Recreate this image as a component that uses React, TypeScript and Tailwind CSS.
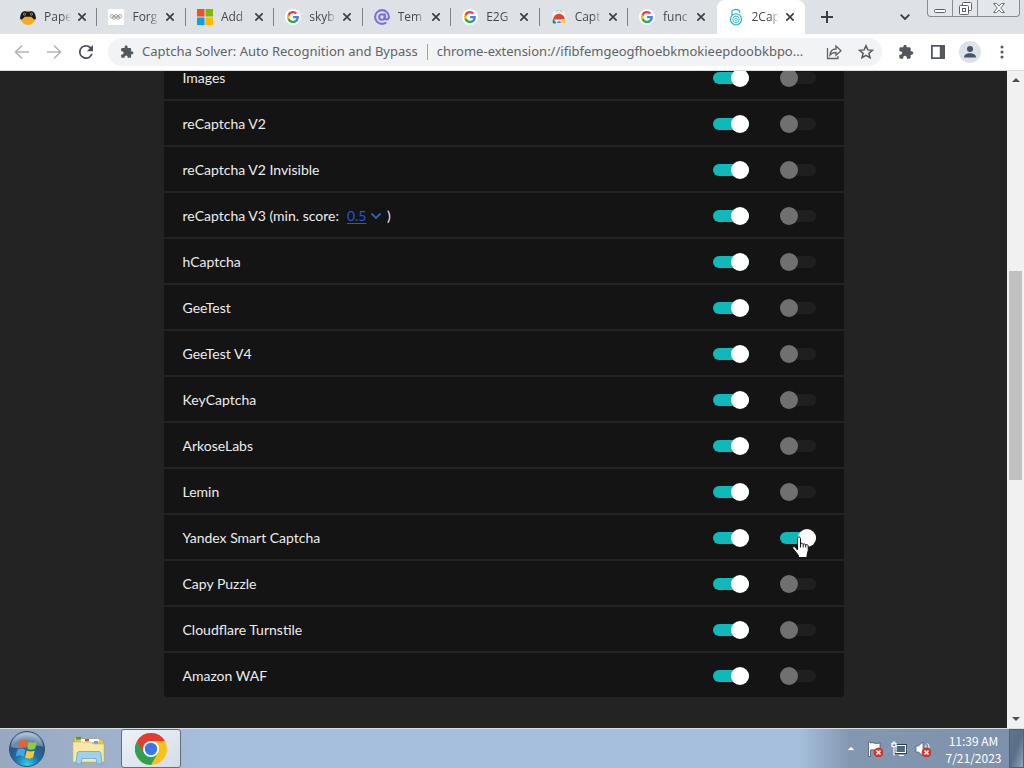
import React from "react";

const googleG = (
  <svg viewBox="0 0 18 18" className="size-4">
    <circle cx="9" cy="9" r="9" fill="#fff" />
    <g transform="translate(2.2 2.2) scale(.76)">
      <path fill="#4285F4" d="M17.64 9.2c0-.64-.06-1.25-.16-1.84H9v3.48h4.84a4.14 4.14 0 0 1-1.8 2.72v2.26h2.92c1.7-1.57 2.68-3.88 2.68-6.62z" />
      <path fill="#34A853" d="M9 18c2.43 0 4.47-.8 5.96-2.18l-2.92-2.26c-.8.54-1.84.86-3.04.86-2.34 0-4.33-1.58-5.04-3.71H.96v2.33A9 9 0 0 0 9 18z" />
      <path fill="#FBBC05" d="M3.96 10.71a5.4 5.4 0 0 1 0-3.42V4.96H.96a9 9 0 0 0 0 8.08z" />
      <path fill="#EA4335" d="M9 3.58c1.32 0 2.5.45 3.44 1.35l2.58-2.59A9 9 0 0 0 .96 4.96l3 2.33C4.67 5.16 6.66 3.58 9 3.58z" />
    </g>
  </svg>
);

const gamepad = (
  <svg viewBox="0 0 16 16" className="size-4">
    <circle cx="8" cy="8.800" r="7.200" fill="#f6ac1e" />
    <path fill="#1a1a1a" d="M3.300 2.500 5.200 2l.8.8h4l.8-.8 1.900.5c1.800.6 3 3.500 3.200 6.200.1 2-1.200 2.400-2.300 1.300L11.200 7.800H4.800L2.400 10C1.300 11.100 0 10.700.1 8.700.3 6 1.500 3.100 3.300 2.500z" />
    <circle cx="4.500" cy="5.200" r="1.100" fill="none" stroke="#ccc" strokeWidth=".6" />
    <circle cx="11.500" cy="5.200" r="1.100" fill="none" stroke="#ccc" strokeWidth=".6" />
  </svg>
);

const rings = (
  <svg viewBox="0 0 16 16" className="size-4">
    <path fill="#fff" d="M0 0h16v16H0z" />
    <g fill="none" stroke="#888" strokeWidth=".7">
      <circle cx="4" cy="7.200" r="1.700" />
      <circle cx="8" cy="7.200" r="1.700" />
      <circle cx="12" cy="7.200" r="1.700" />
      <circle cx="6" cy="8.600" r="1.700" />
      <circle cx="10" cy="8.600" r="1.700" />
    </g>
  </svg>
);

const microsoft = (
  <svg viewBox="0 0 16 16" className="size-4">
    <path fill="#f25022" d="M0 0h7.500v7.500H0z" />
    <path fill="#7fba00" d="M8.500 0H16v7.500H8.500z" />
    <path fill="#0aa1e8" d="M0 8.500h7.500V16H0z" />
    <path fill="#ffb900" d="M8.500 8.500H16V16H8.500z" />
  </svg>
);

const atSign = (
  <svg viewBox="0 0 16 16" className="size-4" fill="none" stroke="#7a72dc" strokeWidth="2.100" strokeLinecap="round">
    <circle cx="8" cy="8" r="2.800" />
    <path d="M10.800 5.200v3.300c0 2.800 4.100 2.300 4.100-.5A6.900 6.900 0 1 0 8 14.900c1.400 0 2.500-.3 3.600-1" />
  </svg>
);

const webStore = (
  <svg viewBox="0 0 16 16" className="size-4">
    <path fill="#f1f2f3" d="M2 2.500h12l1 12H1z" />
    <path fill="#c4c7cb" d="M5.500 1h5v2.500h-5z" />
    <path fill="#fff" d="M6.500 2h3v1h-3z" />
    <path fill="#db4437" d="M2.200 10.500a5.800 5.800 0 0 1 11.600 0z" />
    <path fill="#0f9d58" d="M2.200 9.500 6 14.500H1.800a7 7 0 0 1 .4-5z" />
    <path fill="#ffcd40" d="M10 10.500h3.800a6 6 0 0 1 .4 4H8z" />
    <path d="M5.300 14.500a2.700 2.700 0 1 1 5.400 0z" fill="#4285f4" stroke="#fff" strokeWidth=".7" />
  </svg>
);

const lock = (
  <svg viewBox="0 0 16 18" className="h-[18px] w-4" fill="none" stroke="#3bb7c4" strokeWidth="1.300">
    <path d="M4 7.200V3.500C4 .8 11.500.8 11.500 3.500V5" />
    <circle cx="8" cy="11.300" r="5.500" />
    <circle cx="8" cy="11.300" r="3.200" strokeWidth="1" />
    <circle cx="8" cy="11.300" r="1.200" strokeWidth=".9" />
  </svg>
);

const tabs = [
  { title: "Pape", icon: gamepad },
  { title: "Forg", icon: rings },
  { title: "Add", icon: microsoft },
  { title: "skyb", icon: googleG },
  { title: "Tem", icon: atSign },
  { title: "E2G", icon: googleG },
  { title: "Capt", icon: webStore },
  { title: "func", icon: googleG },
  { title: "2Cap", icon: lock },
];

function TabStrip() {
  return (
    <div className="flex h-[34px] shrink-0 items-stretch bg-[#dee1e6] pl-[9px]">
      <div role="tablist" className="flex max-w-[796px] flex-1">
        {tabs.map((tab, i) => {
          const active = i === tabs.length - 1;
          return (
            <div
              key={tab.title}
              className={
                active
                  ? "flex min-w-0 flex-1 items-center rounded-t-lg bg-white pl-[11px]"
                  : "flex min-w-0 flex-1 items-center pl-[11px]"
              }
            >
              <button role="tab" aria-selected={active} className="flex h-full items-center gap-2">
                <span className="flex w-4 shrink-0 justify-center">{tab.icon}</span>
                <span className="w-[30px] text-left text-xs whitespace-nowrap text-[#45494d] [mask-image:linear-gradient(to_right,black_60%,transparent_90%)]">
                  {tab.title}
                </span>
              </button>
              <button aria-label="Close tab" className="flex size-4 items-center justify-center">
                <svg viewBox="0 0 8 8" className="size-2" stroke="#3c4043" strokeWidth="1.700">
                  <path d="M.3.3l7.400 7.400M7.700.3.3 7.700" />
                </svg>
              </button>
              {!active && i !== tabs.length - 2 && <span className="ml-auto h-[18px] w-px bg-[#7f8388]" />}
            </div>
          );
        })}
      </div>
      <button aria-label="New tab" className="ml-3 flex w-5 items-center justify-center">
        <svg viewBox="0 0 12 12" className="size-3" stroke="#3c4043" strokeWidth="2">
          <path d="M6 0v12M0 6h12" />
        </svg>
      </button>
      <div className="ml-auto flex items-start gap-3 pr-1">
        <button aria-label="Search tabs" className="flex h-[34px] w-5 items-center justify-center">
          <svg viewBox="0 0 10 6" className="h-1.5 w-2.5" fill="none" stroke="#3c4043" strokeWidth="1.900">
            <path d="m.7.7 4.300 4.300L9.300.7" />
          </svg>
        </button>
        <div className="flex h-[17px] rounded-b border border-t-0 border-[#858c94] bg-[#e3e7ec]">
          <button aria-label="Minimize" className="flex w-[25px] items-center justify-center border-r border-[#858c94]">
            <svg viewBox="0 0 12 12" className="mt-1 size-3" fill="#fff" stroke="#5b6067">
              <rect x=".5" y="5.500" width="11" height="3" rx="1" />
            </svg>
          </button>
          <button aria-label="Restore" className="flex w-[25px] items-center justify-center border-r border-[#858c94]">
            <svg viewBox="0 0 13 13" className="size-[13px]" fill="#fff" stroke="#5b6067">
              <rect x="3.500" y=".5" width="9" height="8" rx="1" />
              <rect x=".5" y="3.500" width="9" height="9" rx="1" />
              <rect x="3.500" y="6.500" width="3" height="3" />
            </svg>
          </button>
          <button aria-label="Close" className="flex w-[41px] items-center justify-center">
            <svg viewBox="0 0 12 10" className="h-2.5 w-3" fill="#fff" stroke="#5b6067" strokeWidth=".9">
              <path d="M.6.5h3L6 3.100 8.400.5h3L7.700 5l3.700 4.500h-3L6 6.900 3.600 9.500h-3L4.300 5z" />
            </svg>
          </button>
        </div>
      </div>
    </div>
  );
}

function Puzzle({ className }: { className: string }) {
  return (
    <svg viewBox="0 0 24 24" className={className} fill="#54585d">
      <path d="M20.500 11H19V7c0-1.100-.9-2-2-2h-4V3.500a2.500 2.500 0 0 0-5 0V5H4c-1.100 0-2 .9-2 2v3.800h1.500a2.700 2.700 0 0 1 0 5.400H2V20c0 1.100.9 2 2 2h3.800v-1.500a2.700 2.700 0 0 1 5.400 0V22H17c1.100 0 2-.9 2-2v-4h1.500a2.500 2.500 0 0 0 0-5z" />
    </svg>
  );
}

function Arrow({ label, d }: { label: string; d: string }) {
  return (
    <button aria-label={label} className="flex size-8 items-center justify-center">
      <svg viewBox="0 0 16 16" className="size-4" fill="none" stroke="#b4b6b9" strokeWidth="1.700">
        <path d={d} />
      </svg>
    </button>
  );
}

function Toolbar() {
  return (
    <div className="flex h-[37px] shrink-0 items-center border-b border-[#dadce0] bg-white px-1.5">
      <Arrow label="Back" d="M15 8H2M8 1.500 1.500 8 8 14.500" />
      <Arrow label="Forward" d="M1 8h13M8 1.500 14.500 8 8 14.500" />
      <button aria-label="Reload" className="flex size-8 items-center justify-center">
        <svg viewBox="4 4 16 16" className="size-[14px]" fill="#4b4f54">
          <path d="M17.650 6.350A7.960 7.960 0 0 0 12 4a8 8 0 1 0 7.730 10h-2.080A6 6 0 1 1 12 6c1.660 0 3.140.69 4.220 1.780L13 11h7V4z" />
        </svg>
      </button>
      <div className="ml-1.5 flex h-7 min-w-0 flex-1 items-center rounded-full bg-[#f1f3f4] pr-0.5 pl-3 font-['Noto_Sans','Open_Sans',sans-serif] text-[13px] text-[#5f6368]">
        <Puzzle className="mr-2 size-[14px] shrink-0" />
        <span className="shrink-0 whitespace-nowrap">Captcha Solver: Auto Recognition and Bypass</span>
        <span className="mx-[9px] h-4 w-px shrink-0 bg-[#9aa0a6]" />
        <input
          aria-label="Address"
          readOnly
          value="chrome-extension://ifibfemgeogfhoebkmokieepdoobkbpo..."
          className="min-w-0 flex-1 bg-transparent text-ellipsis outline-none"
        />
        <button aria-label="Share" className="flex size-7 items-center justify-center">
          <svg viewBox="0 0 16 16" className="size-4" fill="none" stroke="#5f6368" strokeWidth="1.300">
            <path d="M1.500 4v10.500H12V12M4 11c.3-4 2.500-6 6-6V2l5 4.700-5 4.600V8.500C7.500 8.500 5.500 9 4 11z" />
          </svg>
        </button>
        <button aria-label="Bookmark" className="ml-1 flex size-7 items-center justify-center">
          <svg viewBox="0 0 16 16" className="size-4" fill="none" stroke="#54585d" strokeWidth="1.500">
            <path d="m8 1.700 1.800 4.200 4.600.4-3.500 3 1.100 4.500L8 11.400l-4 2.400 1.100-4.500-3.500-3 4.600-.4z" />
          </svg>
        </button>
      </div>
      <button aria-label="Extensions" className="ml-2 flex size-8 items-center justify-center">
        <Puzzle className="size-4" />
      </button>
      <button aria-label="Side panel" className="flex size-8 items-center justify-center">
        <svg viewBox="0 0 14 14" className="size-[14px]" fill="#54585d">
          <path fillRule="evenodd" d="M0 0h14v14H0zM1.800 1.800v10.400h7V1.800z" />
        </svg>
      </button>
      <button aria-label="Profile" className="flex size-8 items-center justify-center">
        <svg viewBox="0 0 22 22" className="size-[22px]">
          <circle cx="11" cy="11" r="11" fill="#dde1e8" />
          <circle cx="11" cy="8" r="3" fill="#4a5468" />
          <path fill="#4a5468" d="M5 16.500c0-3 3-4.200 6-4.200s6 1.200 6 4.200z" />
        </svg>
      </button>
      <button aria-label="Menu" className="flex size-8 items-center justify-center">
        <svg viewBox="0 0 4 14" className="h-[14px] w-1" fill="#54585d">
          <circle cx="2" cy="2" r="1.500" />
          <circle cx="2" cy="7" r="1.500" />
          <circle cx="2" cy="12" r="1.500" />
        </svg>
      </button>
    </div>
  );
}

const captchas = [
  "Images",
  "reCaptcha V2",
  "reCaptcha V2 Invisible",
  "reCaptcha V3",
  "hCaptcha",
  "GeeTest",
  "GeeTest V4",
  "KeyCaptcha",
  "ArkoseLabs",
  "Lemin",
  "Yandex Smart Captcha",
  "Capy Puzzle",
  "Cloudflare Turnstile",
  "Amazon WAF",
];

function Toggle({ label, on }: { label: string; on: boolean }) {
  return (
    <input
      type="checkbox"
      aria-label={label}
      defaultChecked={on}
      className="flex h-3 w-9 appearance-none items-center rounded-full bg-[#1f1f1f] before:size-[18px] before:shrink-0 before:rounded-full before:bg-[#707070] checked:justify-end checked:bg-[#0fb9b9] checked:before:bg-white"
    />
  );
}

function HandPointer() {
  return (
    <svg viewBox="0 0 17 22" className="pointer-events-none absolute top-1 left-3 h-[22px] w-[17px]">
      <path
        fill="#fff"
        stroke="#111"
        d="M5.500 14V2.500c0-2 3-2 3 0V8c0-1 2.500-1 2.700.5 0-1 2.500-.8 2.500.7 0-1 2.500-.7 2.500.8v4.500c0 2-1.200 3-1.200 5v2H6.500v-2C5 17.500 3 15 1 12.500c-1-1.800 1-2.500 2.200-1.300z"
      />
      <path stroke="#111" d="M8.500 8v3.500M11.200 8.500v3M13.700 9.200v2.300" />
    </svg>
  );
}

function SettingsPage() {
  return (
    <div className="flex min-h-0 flex-1 bg-[#232323]">
      <main className="flex flex-1 flex-col items-center justify-end overflow-hidden pb-[31px]">
        <ul className="flex w-full max-w-[680px] shrink-0 flex-col gap-0.5 overflow-hidden rounded font-['Lato','Inter',sans-serif] text-sm text-[#ececec]">
          {captchas.map((name) => (
            <li key={name} className="flex h-11 items-center bg-[#141414] pt-0.5 pr-7 pl-[19px]">
              <div className="flex flex-1 items-center">
                {name === "reCaptcha V3" ? (
                  <>
                    <label htmlFor="min-score">{name} (min. score:</label>
                    <span className="ml-2 flex items-center gap-1 text-[#2257e0]">
                      <select id="min-score" defaultValue="0.5" className="appearance-none bg-transparent underline underline-offset-2 outline-none">
                        <option>0.5</option>
                        <option>0.3</option>
                        <option>0.9</option>
                      </select>
                      <svg viewBox="0 0 10 6" className="h-1.5 w-2.5" fill="none" stroke="#2470dd" strokeWidth="1.600">
                        <path d="m.5.5 4.500 4.500L9.500.5" />
                      </svg>
                    </span>
                    <span className="ml-1.5">)</span>
                  </>
                ) : (
                  name
                )}
              </div>
              <div className="flex items-center gap-[31px]">
                <Toggle label={name + " enabled"} on />
                <div className="relative flex">
                  <Toggle label={name + " automatic"} on={name === "Yandex Smart Captcha"} />
                  {name === "Yandex Smart Captcha" && <HandPointer />}
                </div>
              </div>
            </li>
          ))}
        </ul>
      </main>
      <div className="flex w-[17px] flex-col items-center bg-[#f1f1f1] py-[7px]">
        <svg viewBox="0 0 8 4" className="h-1 w-2 shrink-0" fill="#505050">
          <path d="M0 4h8L4 0z" />
        </svg>
        <div className="flex w-full flex-1 flex-col items-center py-1">
          <div className="basis-[185px]" />
          <div className="h-[209px] w-[13px] bg-[#c1c1c1]" />
        </div>
        <svg viewBox="0 0 8 4" className="h-1 w-2 shrink-0" fill="#505050">
          <path d="M0 0h8L4 4z" />
        </svg>
      </div>
    </div>
  );
}

function StartOrb() {
  return (
    <svg viewBox="0 0 38 38" className="size-[38px]">
      <defs>
        <radialGradient id="orb" cx=".5" cy=".95" r=".9">
          <stop offset="0" stopColor="#35d0f0" />
          <stop offset=".4" stopColor="#1c6fa8" />
          <stop offset=".75" stopColor="#2c5580" />
          <stop offset="1" stopColor="#8fb0cc" />
        </radialGradient>
      </defs>
      <circle cx="19" cy="19" r="17.500" fill="url(#orb)" stroke="#33506e" />
      <path fill="#ffffff" opacity=".3" d="M3 17C4 8 11 3 19 3s15 5 16 14c-9-4-22 4-32 0z" />
      <path fill="#e8622c" d="M11.500 11c3-1.700 5.500-1.500 8 0l-1.600 7c-2.600-1.500-5-1.600-8-.2z" />
      <path fill="#95c93d" d="M20.800 11.800c2.700 1.300 5 1.400 8 0l-1.700 7c-2.900 1.400-5.200 1.300-7.900 0z" />
      <path fill="#4aa3e0" d="M9.400 19.500c3-1.400 5.400-1.200 8 .2l-1.700 7c-2.500-1.500-5-1.600-8-.2z" />
      <path fill="#fbc92f" d="M18.800 20.500c2.700 1.300 5 1.300 7.900 0l-1.700 7c-3 1.400-5.300 1.300-7.900-.1z" />
    </svg>
  );
}

function Folder() {
  return (
    <svg viewBox="0 0 34 30" className="h-[30px] w-[34px]">
      <path fill="#dcc268" stroke="#b99b45" strokeWidth=".6" d="M2 1h8l1 2h19l2 3v20H2z" />
      <path fill="#2fa84a" d="M4 1h5v2.500H4z" />
      <path fill="#fff" d="M9 3h18v3H9z" />
      <path fill="#c9553a" d="M13 3h4v2.500h-4z" />
      <path fill="#f8e9a5" stroke="#cdb163" strokeWidth=".6" d="M1 6h18l2 2h11v18H1z" />
      <path fill="#5f9ed0" d="M22 5h4v2.500h-4z" />
      <path fill="#9bd2f0" stroke="#5f9fc8" strokeWidth=".7" d="M5 18c0-2 1-2.500 3-2.500h18c2 0 3 .5 3 2.500l1 10h-5l-1-5.500H10L9 28H4z" />
    </svg>
  );
}

function ChromeLogo() {
  return (
    <svg viewBox="0 0 32 32" className="size-8">
      <circle cx="16" cy="16" r="16" fill="#fbc116" />
      <path fill="#30a04f" d="M2.140 8A16 16 0 0 0 16 32l6.930-12L16 16z" />
      <path fill="#e33b2e" d="M2.140 8A16 16 0 0 1 29.860 8H16L9.070 20z" />
      <circle cx="16" cy="16" r="8" fill="#fff" />
      <circle cx="16" cy="16" r="6.200" fill="#3a76e8" />
    </svg>
  );
}

const badge = (
  <g>
    <circle cx="11.500" cy="11.500" r="4.500" fill="#d5392f" stroke="#9e2620" strokeWidth=".6" />
    <path d="m9.500 9.500 4 4m0-4-4 4" stroke="#fff" strokeWidth="1.500" />
  </g>
);

function Taskbar() {
  return (
    <footer className="flex h-10 shrink-0 items-stretch border-t border-[#d5dfea] bg-[linear-gradient(to_right,#98a8c1_0%,#9fb3ce_12%,#a6bfdc_20%,#a6bfdc_78%,#8397b1_83%,#7d91ac_100%)] pl-2">
      <button aria-label="Start" className="flex w-[38px] items-center justify-center">
        <StartOrb />
      </button>
      <button aria-label="File Explorer" className="ml-[13px] flex w-[60px] items-center justify-center pt-1">
        <Folder />
      </button>
      <button aria-label="Google Chrome" className="ml-0.5 flex w-[60px] items-center justify-center rounded-[3px] border border-[#5f6f84] bg-linear-to-br from-[#eef2f7] to-[#d3dde9]">
        <ChromeLogo />
      </button>
      <div className="ml-auto flex items-center">
        <button aria-label="Show hidden icons" className="flex w-6 justify-center">
          <svg viewBox="0 0 8 5" className="h-[5px] w-2" fill="#fff" stroke="#5f7086" strokeWidth=".4">
            <path d="M0 4.500h8L4 .5z" />
          </svg>
        </button>
        <button aria-label="Action Center" className="flex w-6 justify-center">
          <svg viewBox="0 0 16 16" className="size-4">
            <path fill="#fff" stroke="#34475c" strokeWidth=".7" d="M1.500 1h2v1C6 .8 8 3.500 13 2v7c-4 1.500-6-1-9.500 0v6.500h-2z" />
            {badge}
          </svg>
        </button>
        <button aria-label="Network" className="flex w-6 justify-center">
          <svg viewBox="0 0 16 16" className="size-4">
            <path fill="#51687f" stroke="#2e4054" strokeWidth="3" d="M5 4.500h9.500v7H5z" />
            <path fill="#4e667e" stroke="#fff" strokeWidth="1.200" d="M5 4.500h9.500v7H5zM8 14.500h5" />
            <path fill="none" stroke="#fff" strokeWidth="1.200" d="M1 2v3.500h4V2M2.200.5v3M3.800.5v3M3 5.500v9" />
          </svg>
        </button>
        <button aria-label="Volume" className="flex w-6 justify-center">
          <svg viewBox="0 0 16 16" className="size-4">
            <path fill="#fff" stroke="#34475c" strokeWidth=".6" d="M1 5h2.500L8 1v14l-4.500-4H1z" />
            <path fill="none" stroke="#fff" d="M10 4c1 1 1 2 1 3M12.500 2.500C14 4 14 6 14 7" />
            {badge}
          </svg>
        </button>
        <time className="w-[73px] pl-1 text-center font-['Noto_Sans_CJK_SC','Noto_Sans',sans-serif] text-xs leading-[17px] whitespace-nowrap text-white">
          11:39 AM
          <br />
          7/21/2023
        </time>
        <button aria-label="Show desktop" className="ml-px h-full w-[15px] border border-[#4d6078] bg-linear-to-br from-[#61768d] via-[#5a6f87] to-[#93a7bd]" />
      </div>
    </footer>
  );
}

export default function App() {
  return (
    <div className="flex h-screen flex-col overflow-hidden font-['Open_Sans','Noto_Sans',sans-serif]">
      <TabStrip />
      <Toolbar />
      <SettingsPage />
      <Taskbar />
    </div>
  );
}
